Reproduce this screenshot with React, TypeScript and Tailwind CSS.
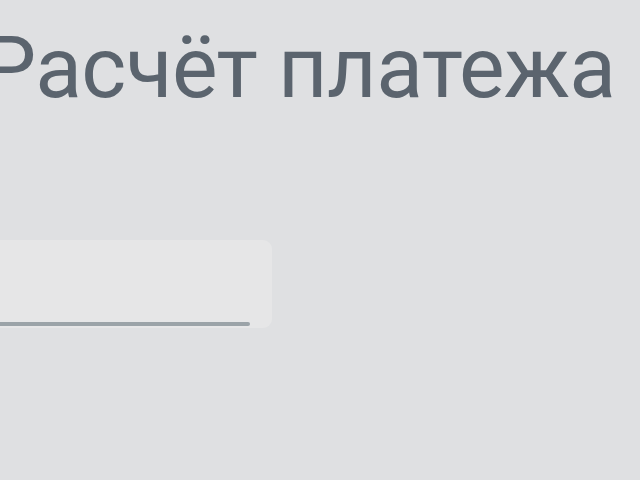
export default function App() {
  return (
    <div className="w-[640px] h-[480px] overflow-hidden bg-[#dfe0e2] font-['Roboto',sans-serif]">
      {/* Page title */}
      <h1 className="ml-[-18px] pt-[13px] text-[86px] leading-[110px] font-normal text-[#5b646e] whitespace-nowrap tracking-[-0.6px]">
        Расчёт платежа
      </h1>

      {/* Filled text field, cut by the viewport on the left */}
      <div className="mt-[117px] ml-[-20px] w-[292px] h-[88px] rounded-[9px] bg-[#e6e6e7] flex flex-col justify-end pb-[2px]">
        <div className="h-[4px] w-[270px] bg-[#9ba3a8] rounded-r-full" />
      </div>
    </div>
  )
}
